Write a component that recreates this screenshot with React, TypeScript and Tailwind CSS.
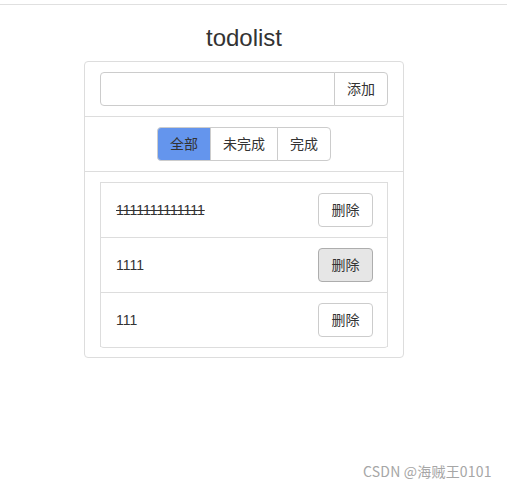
import { useState } from 'react';

interface TodoItem {
  id: number;
  text: string;
  done: boolean;
}

const FILTERS = ['全部', '未完成', '完成'] as const;

const INITIAL_TODOS: TodoItem[] = [
  { id: 1, text: '1111111111111', done: true },
  { id: 2, text: '1111', done: false },
  { id: 3, text: '111', done: false },
];

const FONT = "[font-family:'Liberation_Sans','Noto_Sans_CJK_SC',sans-serif]";

const App = () => {
  const [todos] = useState<TodoItem[]>(INITIAL_TODOS);
  const [filter] = useState<(typeof FILTERS)[number]>('全部');

  return (
    <div className={`relative h-[488px] w-[507px] bg-white text-[#333] ${FONT}`}>
      <div className="pt-1">
        <div className="h-px w-full bg-[#e0e0e0]" />
      </div>
      <div className="w-[488px]">
        <h3 className="mt-5 text-center text-[24px] leading-[26px] font-normal">
          todolist
        </h3>
        <div className="mx-auto mt-[10px] w-[320px] rounded border border-[#ddd]">
          {/* 입력 영역 */}
          <div className="flex px-[15px] py-[10px]">
            <input className="h-[34px] min-w-0 flex-1 rounded-l border border-[#ccc] px-3 text-sm outline-none" />
            <button className="-ml-px h-[34px] w-[54px] rounded-r border border-[#ccc] bg-white text-sm leading-5">
              添加
            </button>
          </div>
          {/* 필터 */}
          <div className="flex justify-center border-t border-[#ddd] px-[15px] py-[10px]">
            {FILTERS.map((item, index) => (
              <button
                key={item}
                className={[
                  'h-[34px] border border-[#ccc] px-3 text-sm leading-5',
                  index > 0 ? '-ml-px' : 'rounded-l',
                  index === FILTERS.length - 1 ? 'rounded-r' : '',
                  item === filter ? 'bg-[#6495ed]' : 'bg-white',
                ].join(' ')}
              >
                {item}
              </button>
            ))}
          </div>
          {/* 목록 */}
          <div className="border-t border-[#ddd] px-[15px] pt-[10px] pb-[9px]">
            <ul className="rounded-sm border-b border-[#ddd]">
              {todos.map((todo) => (
                <li
                  key={todo.id}
                  className="flex items-center justify-between border-x border-t border-[#ddd] py-[10px] pr-[14px] pl-[15px]"
                >
                  <span className={`text-sm ${todo.done ? 'line-through' : ''}`}>
                    {todo.text}
                  </span>
                  <button
                    className={[
                      'h-[34px] w-[55px] rounded border text-sm leading-5',
                      todo.id === 2
                        ? 'border-[#adadad] bg-[#e6e6e6]'
                        : 'border-[#ccc] bg-white',
                    ].join(' ')}
                  >
                    删除
                  </button>
                </li>
              ))}
            </ul>
          </div>
        </div>
      </div>
      <div className="absolute top-[461px] left-[363px] text-[14px] leading-5 tracking-[0.2px] text-[#a6a6a6] [font-family:'Noto_Sans_CJK_SC',sans-serif]">
        CSDN @海贼王0101
      </div>
    </div>
  );
};

export default App;
